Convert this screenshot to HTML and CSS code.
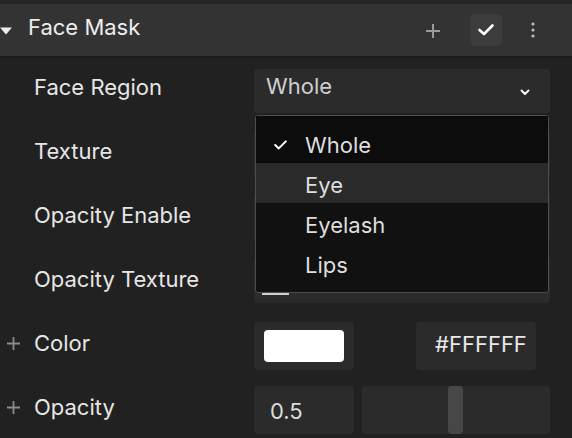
FILE: index.html
```html
<!DOCTYPE html>
<html>
<head>
<meta charset="utf-8">
<link rel="stylesheet" href="styles.css">
</head>
<body>
<div class="panel">
  <div class="topstrip"></div>
  <div class="header">
    <svg class="caret" width="12" height="8" viewBox="0 0 12 8"><path d="M0 0.5 H12 L6 7.5 Z" fill="#eeeeee"/></svg>
    <span class="title">Face Mask</span>
    <div class="header-actions">
      <svg class="hplus" width="14" height="14" viewBox="0 0 14 14"><path d="M7 0 V14 M0 7 H14" stroke="#9a9a9a" stroke-width="2"/></svg>
      <div class="checkbtn">
        <svg width="16" height="12" viewBox="0 0 16 12"><path d="M1.5 6 L6 10 L14.5 1.5" stroke="#ffffff" stroke-width="2.6" fill="none" stroke-linecap="round" stroke-linejoin="round"/></svg>
      </div>
      <svg class="kebab" width="4" height="16" viewBox="0 0 4 16"><circle cx="2" cy="2" r="1.6" fill="#bdbdbd"/><circle cx="2" cy="8" r="1.6" fill="#bdbdbd"/><circle cx="2" cy="14" r="1.6" fill="#bdbdbd"/></svg>
    </div>
  </div>
  <div class="divider"></div>
  <div class="body">
    <div class="row">
      <div class="label">Face Region</div>
      <div class="control select">
        <span>Whole</span>
        <svg width="10" height="7" viewBox="0 0 10 7"><path d="M1.5 1.5 L5 5 L8.5 1.5" stroke="#ffffff" stroke-width="1.8" fill="none" stroke-linecap="round" stroke-linejoin="round"/></svg>
      </div>
      <div class="menu">
        <div class="item selected">
          <svg class="tick" width="13" height="10" viewBox="0 0 13 10"><path d="M1.2 5 L4.8 8.4 L11.8 1.4" stroke="#ffffff" stroke-width="2" fill="none" stroke-linecap="round" stroke-linejoin="round"/></svg>
          <span>Whole</span>
        </div>
        <div class="item hover"><span>Eye</span></div>
        <div class="item"><span>Eyelash</span></div>
        <div class="item"><span>Lips</span></div>
      </div>
    </div>
    <div class="row">
      <div class="label">Texture</div>
      <div class="control wide"></div>
    </div>
    <div class="row">
      <div class="label">Opacity Enable</div>
      <div class="control wide"></div>
    </div>
    <div class="row">
      <div class="label">Opacity Texture</div>
      <div class="control wide texbox"><div class="texbar"></div></div>
    </div>
    <div class="row">
      <div class="label"><svg class="plus" width="13" height="13" viewBox="0 0 13 13"><path d="M6.5 0 V13 M0 6.5 H13" stroke="#8c8c8c" stroke-width="1.8"/></svg>Color</div>
      <div class="control swatchbox"><div class="swatch"></div></div>
      <div class="control hex">#FFFFFF</div>
    </div>
    <div class="row">
      <div class="label"><svg class="plus" width="13" height="13" viewBox="0 0 13 13"><path d="M6.5 0 V13 M0 6.5 H13" stroke="#8c8c8c" stroke-width="1.8"/></svg>Opacity</div>
      <div class="control num">0.5</div>
      <div class="control slider"><div class="thumb"></div></div>
    </div>
  </div>
</div>
</body>
</html>
```
FILE: styles.css
```css
html, body {
  margin: 0;
  padding: 0;
  background: #212121;
}
body {
  width: 572px;
  height: 438px;
  overflow: hidden;
  font-family: Inter, "Noto Sans", sans-serif;
  color: #e8e8e8;
}
.panel {
  width: 572px;
}
.topstrip {
  height: 4px;
  background: #262626;
}
.header {
  height: 52px;
  background: #333333;
  display: flex;
  align-items: center;
  position: relative;
}
.caret {
  margin-left: 0;
  margin-top: 2px;
}
.title {
  margin-left: 16px;
  font-size: 22px;
  color: #ededed;
  margin-top: -6px;
}
.header-actions {
  margin-left: auto;
  display: flex;
  align-items: center;
}
.hplus {
  margin-right: 30px;
  margin-top: 2px;
}
.checkbtn {
  width: 32px;
  height: 32px;
  background: #3c3c3c;
  border-radius: 5px;
  display: flex;
  align-items: center;
  justify-content: center;
  margin-right: 29px;
}
.kebab {
  margin-right: 37px;
}
.divider {
  height: 2px;
  background: #1b1b1b;
}
.body {
  padding-top: 8px;
  display: flex;
  flex-direction: column;
  gap: 16px;
}
.row {
  height: 48px;
  display: flex;
  align-items: center;
  position: relative;
}
.label {
  width: 254px;
  flex: none;
  font-size: 22px;
  color: #e6e6e6;
  padding-left: 34px;
  box-sizing: border-box;
  position: relative;
  margin-top: -6px;
}
.plus {
  position: absolute;
  left: 7px;
  top: 7px;
}
.control {
  background: #2b2b2b;
  border-radius: 4px;
  height: 48px;
  box-sizing: border-box;
}
.select {
  width: 296px;
  height: 44px;
  display: flex;
  align-items: center;
  padding: 0 20px 0 12px;
  font-size: 22px;
  color: #cfcfcf;
  margin-top: 2px;
}
.select span {
  margin-top: -10px;
}
.select svg {
  margin-left: auto;
  margin-top: 3px;
}
.wide {
  width: 296px;
}
.texbox {
  position: relative;
  height: 45px;
  align-self: flex-start;
}
.texbar {
  position: absolute;
  left: 8px;
  top: 33px;
  width: 27px;
  height: 4px;
  background: #cfcfcf;
}
.swatchbox {
  width: 100px;
  padding: 8px 10px;
}
.swatch {
  background: #ffffff;
  border-radius: 4px;
  height: 32px;
}
.hex {
  width: 120px;
  margin-left: 62px;
  font-size: 22px;
  color: #e8e8e8;
  padding-left: 19px;
  line-height: 44px;
}
.num {
  width: 100px;
  font-size: 22px;
  color: #dcdcdc;
  padding-left: 16px;
  line-height: 50px;
}
.slider {
  width: 188px;
  margin-left: 8px;
  position: relative;
}
.thumb {
  position: absolute;
  left: 86px;
  top: 0;
  width: 15px;
  height: 48px;
  background: #474747;
  border-radius: 4px;
}
.menu {
  position: absolute;
  left: 255px;
  top: 49px;
  width: 294px;
  height: 178px;
  box-sizing: border-box;
  background: #111111;
  border: 1px solid #4d4d4d;
  border-radius: 3px;
  z-index: 5;
  font-size: 22px;
  color: #dedede;
}
.item {
  height: 40px;
  box-sizing: border-box;
  padding-top: 7px;
  line-height: 30px;
  padding-left: 49px;
  position: relative;
}
.item.selected {
  height: 47px;
  padding-top: 14px;
  background: #0c0c0c;
}
.item.hover {
  background: #2a2a2a;
}
.tick {
  position: absolute;
  left: 18px;
  top: 24px;
}
```
